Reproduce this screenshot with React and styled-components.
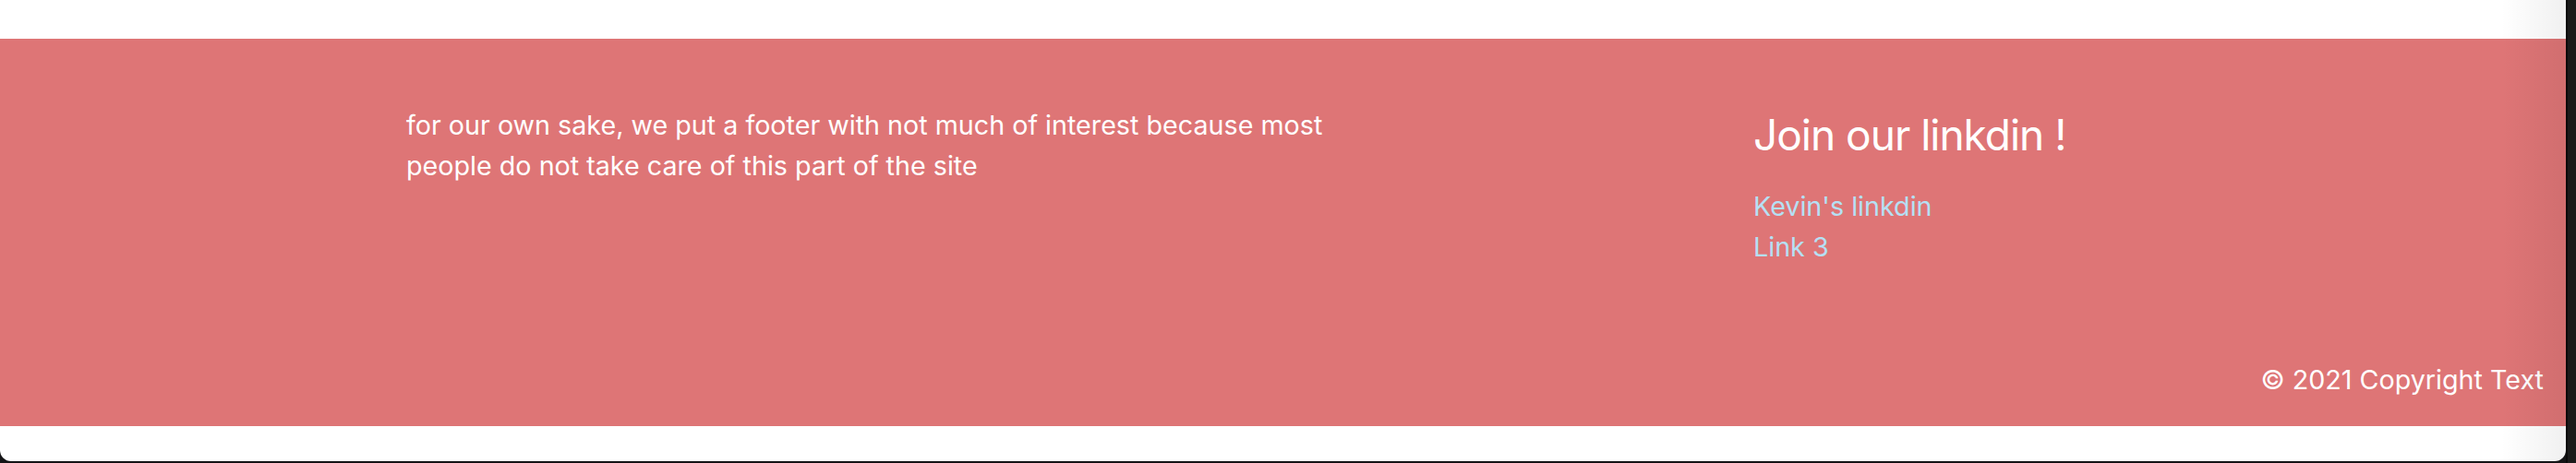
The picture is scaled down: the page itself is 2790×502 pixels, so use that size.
import styled, { createGlobalStyle } from 'styled-components';

const GlobalStyle = createGlobalStyle`
  html, body {
    margin: 0;
    padding: 0;
    background: #141416;
  }

  body {
    font-family: Inter, 'Liberation Sans', sans-serif;
  }
`;

const Screen = styled.div`
  display: flex;
  width: 2790px;
  height: 502px;
  overflow: hidden;
`;

const Page = styled.div`
  position: relative;
  flex: 0 0 2779px;
  height: 500px;
  background: #fff;
  border-radius: 0 0 12px 12px;
  overflow: hidden;
  padding-top: 42px;
  box-sizing: border-box;

  &:after {
    content: '';
    position: absolute;
    top: 0;
    right: 0;
    bottom: 0;
    width: 70px;
    background: linear-gradient(to right, rgba(0, 0, 0, 0), rgba(0, 0, 0, 0.06));
    pointer-events: none;
  }
`;

const Edge = styled.div`
  flex: 1;
  background: #1a1a1a;
  border-left: 2px solid #0a0a0a;
`;

const Footer = styled.footer`
  background: #de7576;
  color: #fff;
  font-size: 28.7px;
  line-height: 43.5px;
`;

const Columns = styled.div`
  display: grid;
  grid-template-columns: 1040px 1fr;
  column-gap: 419px;
  padding: 72px 0 73px 440px;
`;

const About = styled.p`
  margin: 0;
`;

const Title = styled.h5`
  margin: 2px 0 26px;
  font-size: 46px;
  font-weight: 400;
  line-height: 60px;
  letter-spacing: -1px;
`;

const Links = styled.ul`
  list-style: none;
  margin: 0;
  padding: 0;

  a {
    color: #b5e0f4;
    text-decoration: none;
  }
`;

const Copyright = styled.div`
  text-align: right;
  padding: 28px 24px 28px 0;
`;

function App() {
  return (
    <Screen>
      <GlobalStyle />
      <Page>
        <Footer>
          <Columns>
            <About>
              for our own sake, we put a footer with not much of interest because most people do not take care of this part of the site
            </About>
            <div>
              <Title>Join our linkdin !</Title>
              <Links>
                <li>
                  <a href='#!'>Kevin's linkdin</a>
                </li>
                <li>
                  <a href='#!'>Link 3</a>
                </li>
              </Links>
            </div>
          </Columns>
          <Copyright>© 2021 Copyright Text</Copyright>
        </Footer>
      </Page>
      <Edge />
    </Screen>
  );
}

export default App;
